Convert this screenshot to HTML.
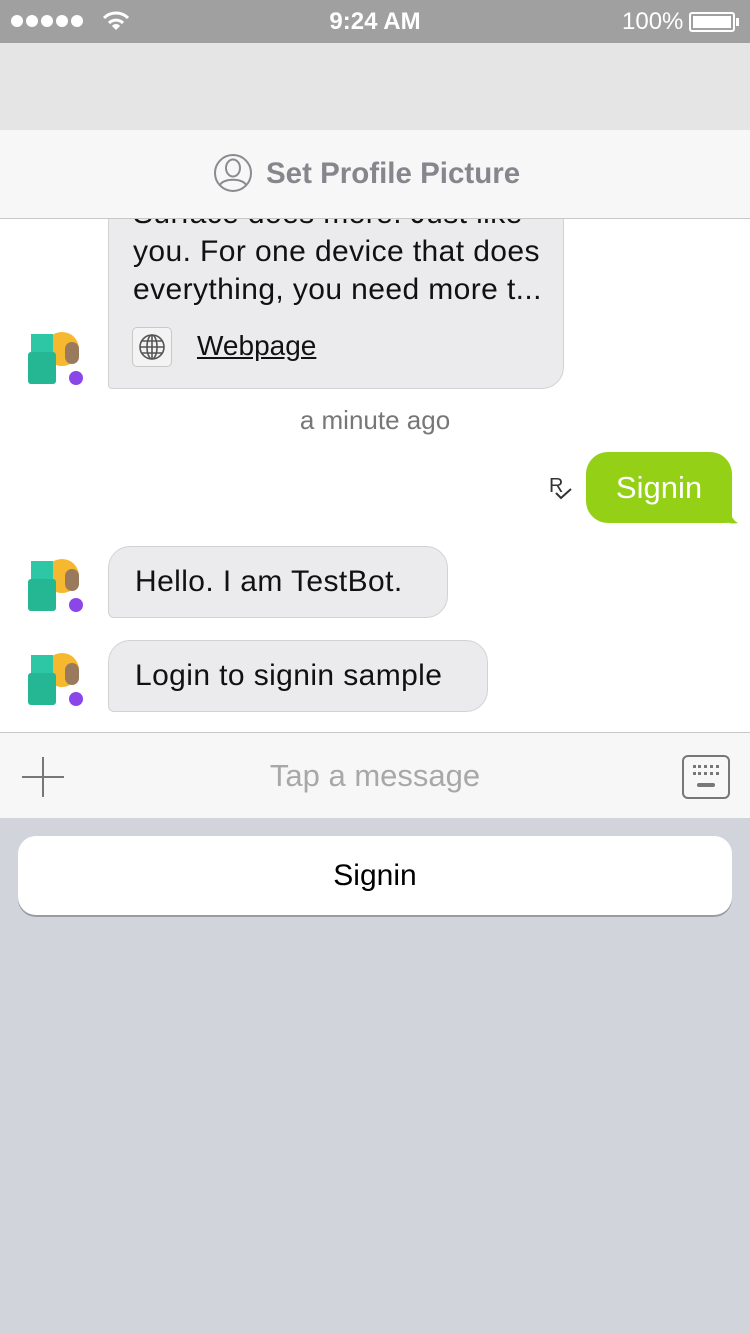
<!DOCTYPE html>
<html><head><meta charset="utf-8"><style>
*{margin:0;padding:0;box-sizing:border-box}
body{width:750px;height:1334px;overflow:hidden;background:#d1d5db;font-family:"Liberation Sans",sans-serif;position:relative}
.abs{position:absolute}
.status{left:0;top:0;width:750px;height:43px;background:#a0a0a0;color:#fff;font-size:24px}
.nav{left:0;top:43px;width:750px;height:87px;background:#e5e5e5}
.hdr{left:0;top:130px;width:750px;height:89px;background:#f7f7f7;border-bottom:1px solid #c8c8c8;z-index:3}
.chat{left:0;top:219px;width:750px;height:513px;background:#fff;overflow:hidden}
.bub{position:absolute;background:#ebebed;border:1px solid #d2d2d4;border-radius:22px;font-size:30px;letter-spacing:0.4px;color:#111}
.av{position:absolute;width:62px;height:62px}
.inp{left:0;top:732px;width:750px;height:86px;background:#f7f7f7;border-top:1px solid #c8c8c8}
.btn{left:18px;top:836px;width:714px;height:79px;background:#fff;border-radius:18px;box-shadow:0 2px 0 #9a9ca0;text-align:center;line-height:79px;font-size:30px;color:#000}
</style></head><body>
<div class="abs status">
  <div class="abs" style="left:11px;top:15px;display:flex;gap:3px"><i style="width:12px;height:12px;border-radius:6px;background:#fff;display:block"></i><i style="width:12px;height:12px;border-radius:6px;background:#fff;display:block"></i><i style="width:12px;height:12px;border-radius:6px;background:#fff;display:block"></i><i style="width:12px;height:12px;border-radius:6px;background:#fff;display:block"></i><i style="width:12px;height:12px;border-radius:6px;background:#fff;display:block"></i></div>
  <svg class="abs" style="left:101px;top:10px" width="30" height="22" viewBox="0 0 30 22"><path d="M3 8 A17 17 0 0 1 27 8" stroke="#fff" stroke-width="3" fill="none"/><path d="M8 13 A10 10 0 0 1 22 13" stroke="#fff" stroke-width="3" fill="none"/><path d="M15 20 L11 16 A5 5 0 0 1 19 16 Z" fill="#fff"/></svg>
  <div class="abs" style="left:0;width:750px;top:8px;text-align:center;font-weight:bold">9:24 AM</div>
  <div class="abs" style="left:622px;top:8px">100%</div>
  <div class="abs" style="left:689px;top:12px;width:46px;height:20px;border:2px solid #fff;border-radius:3px;padding:2px"><div style="background:#fff;width:100%;height:100%"></div></div>
  <div class="abs" style="left:736px;top:18px;width:3px;height:8px;background:#fff"></div>
</div>
<div class="abs nav"></div>
<div class="abs hdr">
  <svg class="abs" style="left:213px;top:23px" width="40" height="40" viewBox="0 0 40 40" fill="none" stroke="#8a8a90" stroke-width="2"><circle cx="20" cy="20" r="18"/><ellipse cx="20" cy="15" rx="7" ry="8.5"/><path d="M7 32 C10 25 30 25 33 32"/></svg>
  <div class="abs" style="left:266px;top:27px;font-size:29.5px;font-weight:bold;color:#86868c">Set Profile Picture</div>
</div>
<div class="abs chat">
  <div class="bub" style="left:108px;top:-40px;width:456px;height:210px;border-bottom-left-radius:4px">
    <div style="position:absolute;left:24px;top:15px;line-height:38px;width:430px;white-space:nowrap">Surface does more. Just like<br>you. For one device that does<br>everything, you need more t...</div>
    <div style="position:absolute;left:23px;top:147px;width:40px;height:40px;border:1px solid #c8c8c8;border-radius:5px;background:#f3f3f3">
      <svg width="38" height="38" viewBox="0 0 38 38" fill="none" stroke="#555" stroke-width="1.6"><circle cx="19" cy="19" r="12"/><ellipse cx="19" cy="19" rx="5" ry="12"/><path d="M7 19h24M9 13h20M9 25h20M19 7v24"/></svg>
    </div>
    <div style="position:absolute;left:88px;top:150px;text-decoration:underline;font-size:28px;letter-spacing:0">Webpage</div>
  </div>
  <div class="abs" style="left:0;width:750px;top:186px;text-align:center;font-size:26px;color:#777">a minute ago</div>
  <div class="abs" style="left:549px;top:256px;font-size:20px;color:#333">R</div>
  <svg class="abs" style="left:555px;top:268px" width="18" height="14"><path d="M1 6 L6 11 L16 2" stroke="#333" stroke-width="2" fill="none"/></svg>
  <div class="abs" style="left:586px;top:233px;width:146px;height:71px;background:#93d016;border-radius:22px;border-bottom-right-radius:6px;color:#fff;font-size:31px;text-align:center;line-height:71px">Signin</div>
  <svg class="abs" style="left:722px;top:284px" width="18" height="22"><path d="M0 0 L6 0 Q8 16 16 20 Q6 22 0 16Z" fill="#93d016"/></svg>
  <div class="bub" style="left:108px;top:327px;width:340px;height:72px;border-bottom-left-radius:6px;line-height:70px;padding-left:26px">Hello. I am TestBot.</div>
  <div class="bub" style="left:108px;top:421px;width:380px;height:72px;border-bottom-left-radius:6px;line-height:70px;padding-left:26px">Login to signin sample</div>
</div>
<div class="av abs" style="left:25px;top:324px"><div class="abs" style="left:20px;top:8px;width:34px;height:34px;border-radius:17px;background:#f5b82e"></div><div class="abs" style="left:6px;top:10px;width:22px;height:18px;background:#2ec7a6"></div><div class="abs" style="left:3px;top:28px;width:28px;height:32px;background:#25b793;border-radius:3px"></div><div class="abs" style="left:40px;top:18px;width:14px;height:22px;background:#9a7a5c;border-radius:7px"></div><div class="abs" style="left:44px;top:47px;width:14px;height:14px;border-radius:7px;background:#8a46e8"></div></div>
<div class="av abs" style="left:25px;top:551px"><div class="abs" style="left:20px;top:8px;width:34px;height:34px;border-radius:17px;background:#f5b82e"></div><div class="abs" style="left:6px;top:10px;width:22px;height:18px;background:#2ec7a6"></div><div class="abs" style="left:3px;top:28px;width:28px;height:32px;background:#25b793;border-radius:3px"></div><div class="abs" style="left:40px;top:18px;width:14px;height:22px;background:#9a7a5c;border-radius:7px"></div><div class="abs" style="left:44px;top:47px;width:14px;height:14px;border-radius:7px;background:#8a46e8"></div></div>
<div class="av abs" style="left:25px;top:645px"><div class="abs" style="left:20px;top:8px;width:34px;height:34px;border-radius:17px;background:#f5b82e"></div><div class="abs" style="left:6px;top:10px;width:22px;height:18px;background:#2ec7a6"></div><div class="abs" style="left:3px;top:28px;width:28px;height:32px;background:#25b793;border-radius:3px"></div><div class="abs" style="left:40px;top:18px;width:14px;height:22px;background:#9a7a5c;border-radius:7px"></div><div class="abs" style="left:44px;top:47px;width:14px;height:14px;border-radius:7px;background:#8a46e8"></div></div>
<div class="abs inp">
  <div class="abs" style="left:22px;top:43px;width:42px;height:2px;background:#777"></div>
  <div class="abs" style="left:42px;top:24px;width:2px;height:40px;background:#777"></div>
  <div class="abs" style="left:0;width:750px;top:25px;text-align:center;font-size:31px;color:#a8a8a8">Tap a message</div>
  <div class="abs" style="left:682px;top:22px;width:48px;height:44px;border:2px solid #777;border-radius:6px">
    <div class="abs" style="left:9px;top:8px;width:26px;height:3px;border-top:3px dotted #777"></div>
    <div class="abs" style="left:9px;top:15px;width:26px;height:3px;border-top:3px dotted #777"></div>
    <div class="abs" style="left:13px;top:26px;width:18px;height:4px;background:#777;border-radius:2px"></div>
  </div>
</div>
<div class="abs btn">Signin</div>
</body></html>
